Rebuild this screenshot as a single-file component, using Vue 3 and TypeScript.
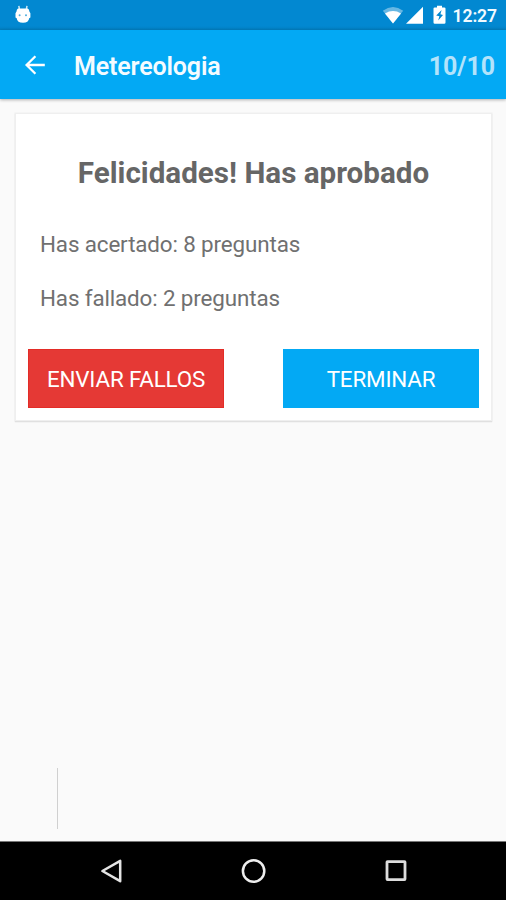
<script setup lang="ts">
import { ref } from 'vue'

const title = ref('Metereologia')
const answered = ref(10)
const total = ref(10)
const correct = ref(8)
const failed = ref(2)
</script>

<template>
  <div class="screen">
    <header class="status-bar">
      <svg class="droid" width="18" height="20" viewBox="0 0 18 20">
        <path d="M4.8 0.8 5.4 4M13 0.8 12.4 4" stroke="#fff" stroke-opacity=".8" stroke-width="1.5" />
        <path d="M4 3.6H13.8Q15.4 4.4 15.4 6.5L16.4 8.2V12.4L15.2 13.2Q14.6 17.8 9 17.8Q3.2 17.8 2.7 13.2L1.5 12.4V8.2L2.5 6.5Q2.5 4.4 4 3.6Z" fill="#fff" />
        <circle cx="5.6" cy="10.2" r="1" fill="#4fadde" />
        <circle cx="12" cy="10.2" r="1" fill="#4fadde" />
      </svg>
      <div class="indicators">
        <svg class="wifi" width="22" height="18" viewBox="0 0 22 18">
          <path d="M0.8 4.8Q11-2.6 21.2 4.8L11 17.4Z" fill="#fff" fill-opacity=".4" />
          <path d="M3 7.4Q11 2.8 19 7.4L11 17.4Z" fill="#fff" />
        </svg>
        <svg class="signal" width="18" height="18" viewBox="0 0 18 18">
          <path d="M0 17.8 17 .8V17.8Z" fill="#fff" />
        </svg>
        <svg class="battery" width="13" height="19" viewBox="0 0 13 19">
          <path d="M4 0.7H9V2.4H11.2Q12.5 2.4 12.5 3.6V17.5Q12.5 18.8 11.2 18.8H1.8Q.5 18.8 .5 17.5V3.6Q.5 2.4 1.8 2.4H4Z" fill="#fff" />
          <path d="M8.6 5 3.2 10.4 6.4 11.2 5.2 15.4 10 10 7.4 9.2Z" fill="#0288d1" />
        </svg>
        <span class="clock">12:27</span>
      </div>
    </header>

    <div class="app-bar">
      <svg class="back" width="22" height="20" viewBox="0 0 22 20">
        <path d="M20.8 10H2.6M11.4 1.2 2.6 10 11.4 18.8" fill="none" stroke="#fff" stroke-width="2.3" />
      </svg>
      <h1 class="title">{{ title }}</h1>
      <span class="progress">{{ answered }}/{{ total }}</span>
    </div>

    <main class="content">
      <section class="card">
        <h2 class="heading">Felicidades! Has aprobado</h2>
        <p class="line">Has acertado: {{ correct }} preguntas</p>
        <p class="line">Has fallado: {{ failed }} preguntas</p>
        <div class="actions">
          <button class="btn btn-red">ENVIAR FALLOS</button>
          <button class="btn btn-blue">TERMINAR</button>
        </div>
      </section>
      <div class="divider"></div>
    </main>

    <nav class="nav-bar">
      <svg width="24" height="26" viewBox="0 0 24 26">
        <path d="M2.4 13 20.2 2.8V23.2Z" fill="none" stroke="#e4e4e4" stroke-width="2.5" stroke-linejoin="round" />
      </svg>
      <svg width="26" height="26" viewBox="0 0 26 26">
        <circle cx="12.6" cy="13" r="10.7" fill="none" stroke="#eee" stroke-width="2.5" />
      </svg>
      <svg width="24" height="26" viewBox="0 0 24 26">
        <rect x="3" y="3.6" width="18" height="18" rx=".5" fill="none" stroke="#ddd" stroke-width="2.8" />
      </svg>
    </nav>
  </div>
</template>

<style>
body {
  margin: 0;
}
</style>

<style scoped>
.screen {
  display: flex;
  flex-direction: column;
  width: 506px;
  height: 900px;
  overflow: hidden;
  background: #fafafa;
  font-family: Roboto, "Liberation Sans", sans-serif;
}
.status-bar {
  display: flex;
  box-sizing: border-box;
  height: 30px;
  padding: 5px 9px 0 14px;
  justify-content: space-between;
  background: linear-gradient(#0288d1 26px, #027ebf 30px);
}
.indicators {
  display: flex;
  align-items: flex-start;
}
.wifi {
  margin-top: 1px;
}
.signal {
  margin: 1px 9px 0 2px;
}
.battery {
  margin-right: 7px;
}
.clock {
  color: #f2faff;
  font-size: 17.6px;
  font-weight: 600;
  letter-spacing: -0.1px;
  line-height: 22px;
}
.app-bar {
  display: flex;
  box-sizing: border-box;
  height: 69px;
  padding: 0 11px 0 24px;
  align-items: center;
  background: #03a9f4;
  box-shadow: 0 1px 3px rgba(0, 0, 0, 0.3);
  z-index: 1;
}
.title {
  flex: 1;
  margin: 3px 0 0 28px;
  color: #f4fbff;
  font-size: 25px;
  font-weight: 600;
  letter-spacing: -0.15px;
}
.progress {
  margin-top: 3px;
  color: #b3e3fb;
  font-size: 25px;
  font-weight: 700;
  letter-spacing: -0.1px;
}
.content {
  display: flex;
  flex: 1;
  flex-direction: column;
  justify-content: space-between;
  padding: 15px 15px 12px 16px;
}
.card {
  box-sizing: border-box;
  height: 306px;
  padding: 39px 12px 12px;
  background: #fff;
  box-shadow: 0 0 0 1.5px #efefef, 0 1px 1px 1px #d0d0d0;
}
.heading {
  margin: 0 0 36px;
  color: #666;
  font-size: 29.6px;
  font-weight: 700;
  line-height: 40px;
  text-align: center;
}
.line {
  margin: 0 0 24px 12px;
  color: #707070;
  font-size: 22.4px;
  letter-spacing: -0.13px;
  line-height: 30px;
}
.actions {
  display: flex;
  justify-content: space-between;
  margin-top: 36px;
}
.btn {
  width: 196px;
  height: 59px;
  padding: 0;
  border: 0;
  color: #fff;
  font-family: inherit;
  font-size: 22.4px;
  letter-spacing: -0.18px;
}
.btn-red {
  background: #e53935;
  box-shadow: inset 0 0 0 1px #e32c27;
}
.btn-blue {
  background: #03a9f4;
}
.divider {
  width: 1px;
  height: 61px;
  margin-left: 41px;
  background: #d0d0d0;
}
.nav-bar {
  display: flex;
  box-sizing: border-box;
  height: 59px;
  padding: 0 98px 0 100px;
  align-items: center;
  justify-content: space-between;
  border-top: 1px solid #777;
  background: #000;
}
</style>
